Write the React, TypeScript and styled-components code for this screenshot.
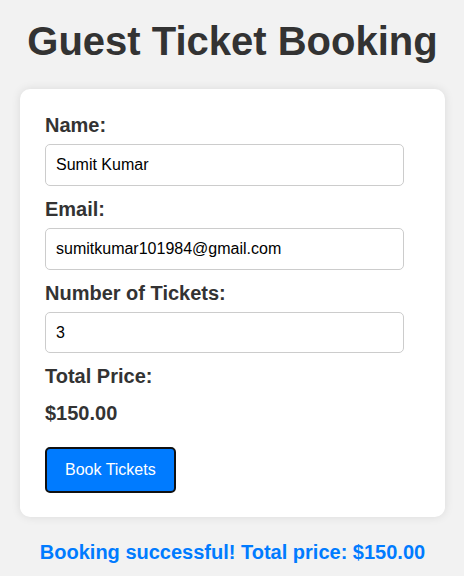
import React from "react";
import styled, { createGlobalStyle } from "styled-components";

const Global = createGlobalStyle`
  html, body { margin: 0; padding: 0; background: #f2f2f2; }
  body { font-family: "Liberation Sans", Arial, sans-serif; color: #333; }
  * { box-sizing: border-box; }
`;

const Page = styled.div`
  display: flex;
  flex-direction: column;
  padding: 19px 19px 0 20px;
`;

const Title = styled.h1`
  margin: 0 0 25px;
  font-size: 40px;
  font-weight: 700;
  text-align: center;
  color: #333;
`;

const Card = styled.div`
  background: #fff;
  border-radius: 10px;
  box-shadow: 0 0 10px rgba(0, 0, 0, 0.1);
  padding: 25px 25px 24px;
  display: flex;
  flex-direction: column;
  align-items: flex-start;
`;

const Label = styled.label`
  display: block;
  font-size: 20px;
  font-weight: 700;
  color: #333;
  margin-bottom: 7px;
`;

const Input = styled.input<{ $h: number }>`
  width: 359px;
  height: ${(p) => p.$h}px;
  padding: 0 10px;
  border: 1px solid #ccc;
  border-radius: 5px;
  font-family: "Liberation Sans", Arial, sans-serif;
  font-size: 16px;
  color: #000;
  background: #fff;
  margin-bottom: 12px;
  outline: none;
`;

const Price = styled.div`
  font-size: 20px;
  font-weight: 700;
  color: #333;
  margin-top: 7px;
  margin-bottom: 22px;
`;

const Button = styled.button`
  background: #007bff;
  color: #fff;
  border: 2px solid #111;
  border-radius: 5px;
  padding: 12px 18px;
  font-family: "Liberation Sans", Arial, sans-serif;
  font-size: 16px;
  cursor: pointer;
`;

const Success = styled.p`
  margin: 24px 0 0;
  text-align: center;
  color: #007bff;
  font-size: 20px;
  font-weight: 700;
`;

export default function App() {
  return (
    <>
      <Global />
      <Page>
        <Title>Guest Ticket Booking</Title>
        <Card>
          <Label>Name:</Label>
          <Input $h={42} type="text" defaultValue="Sumit Kumar" />
          <Label>Email:</Label>
          <Input $h={42} type="email" defaultValue="sumitkumar101984@gmail.com" />
          <Label>Number of Tickets:</Label>
          <Input $h={41} type="text" defaultValue="3" />
          <Label>Total Price:</Label>
          <Price>$150.00</Price>
          <Button>Book Tickets</Button>
        </Card>
        <Success>Booking successful! Total price: $150.00</Success>
      </Page>
    </>
  );
}
